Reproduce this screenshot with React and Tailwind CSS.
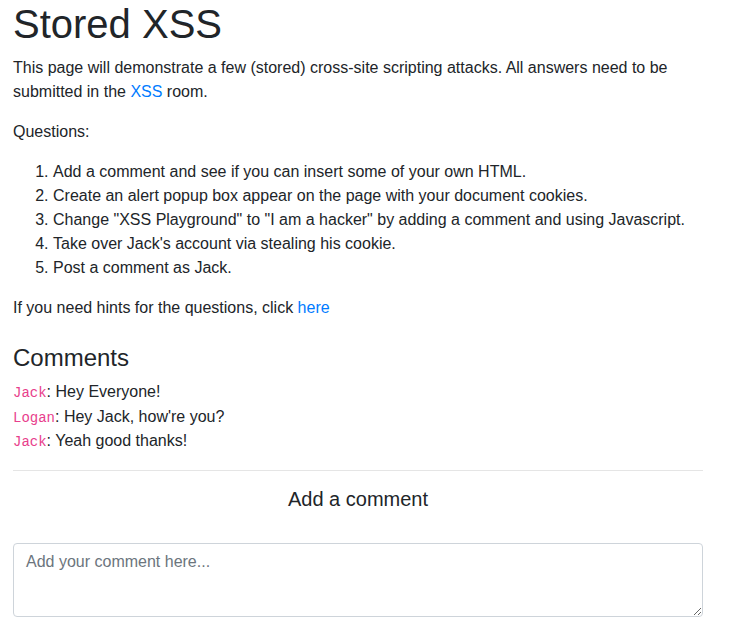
export default function App() {
  const comments = [
    { user: "Jack", text: "Hey Everyone!" },
    { user: "Logan", text: "Hey Jack, how're you?" },
    { user: "Jack", text: "Yeah good thanks!" },
  ];

  return (
    <div className="min-h-screen bg-white text-[#212529] font-['Liberation_Sans',Arial,sans-serif] text-base leading-6">
      <div className="w-[690px] ml-[13px]">
        <h1 className="text-[40px] leading-[48px] font-normal mb-2">Stored XSS</h1>
        <p className="mb-4">
          This page will demonstrate a few (stored) cross-site scripting attacks. All answers need to be
          submitted in the <a href="#" className="text-[#007bff]">XSS</a> room.
        </p>
        <p className="mb-4">Questions:</p>
        <ol className="list-decimal pl-10 mb-4">
          <li>Add a comment and see if you can insert some of your own HTML.</li>
          <li>Create an alert popup box appear on the page with your document cookies.</li>
          <li>Change "XSS Playground" to "I am a hacker" by adding a comment and using Javascript.</li>
          <li>Take over Jack's account via stealing his cookie.</li>
          <li>Post a comment as Jack.</li>
        </ol>
        <p className="mb-4">
          If you need hints for the questions, click <a href="#" className="text-[#007bff]">here</a>
        </p>

        <h4 className="text-2xl leading-[29px] font-normal mt-[23px] mb-2">Comments</h4>
        <div>
          {comments.map((c, i) => (
            <div key={i} className="h-[24.5px] leading-[24.5px]">
              <code className="text-[14px] text-[#e83e8c] font-['Liberation_Mono','Courier_New',monospace]">{c.user}</code>
              : {c.text}
            </div>
          ))}
        </div>

        <hr className="mt-4 mb-4 border-0 border-t border-[rgba(0,0,0,0.1)]" />
        <h5 className="text-xl leading-6 font-normal text-center">Add a comment</h5>

        <textarea
          className="block w-full h-[74px] mt-8 px-3 py-1.5 border border-[#ced4da] rounded text-base leading-6 text-[#495057] placeholder:text-[#6c757d] outline-none"
          placeholder="Add your comment here..."
        />
      </div>
    </div>
  );
}
